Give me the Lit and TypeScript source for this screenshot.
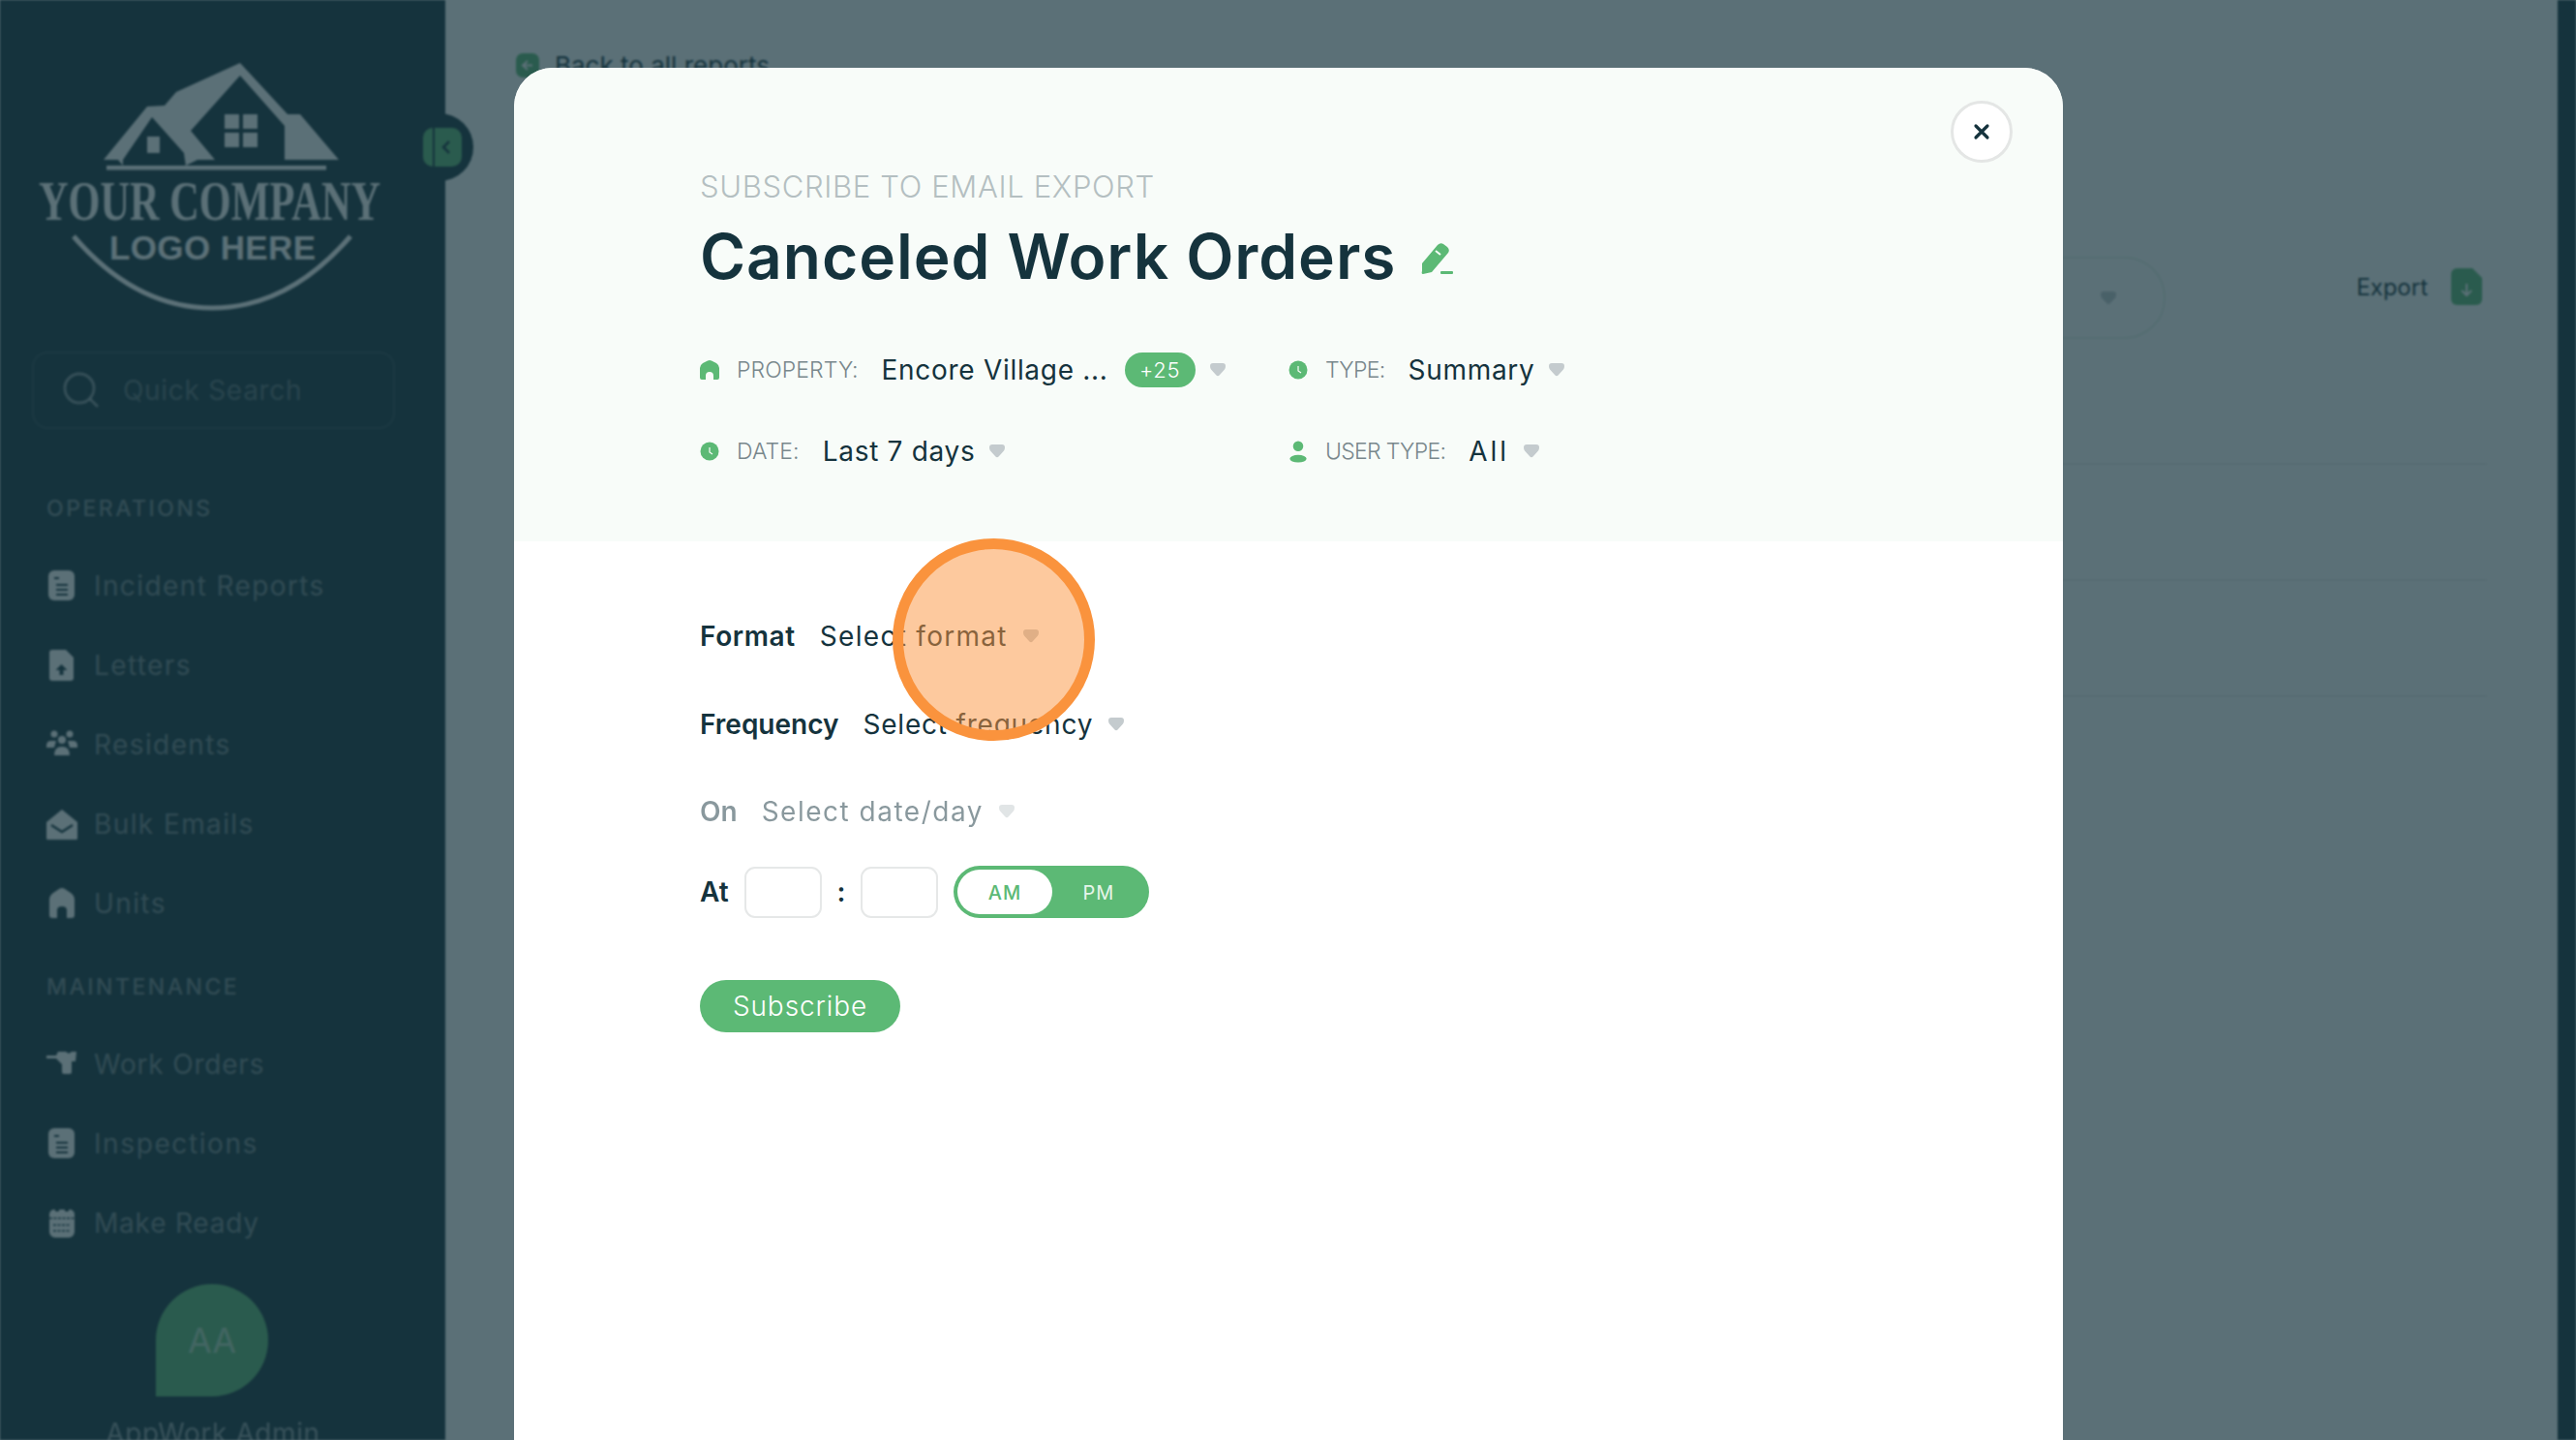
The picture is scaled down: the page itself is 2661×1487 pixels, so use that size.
import { LitElement, html, css, svg } from "lit";
import { customElement } from "lit/decorators.js";

const ICONS: Record<string, any> = {
  doc: svg`<rect x="2" y="0" width="27" height="31" rx="6"/><g stroke="#15333d" stroke-width="2"><path d="M8 8h5M10 15h12M10 20h12M10 25h12"/></g>`,
  letter: svg`<path d="M6 0h14l8 8v21a3 3 0 0 1-3 3H6a3 3 0 0 1-3-3V3a3 3 0 0 1 3-3z"/><path d="M15.500 15l6 6h-4v5h-4v-5h-4z" fill="#15333d"/>`,
  people: svg`<circle cx="8" cy="5" r="3.500"/><circle cx="24" cy="5" r="3.500"/><circle cx="16" cy="11" r="4"/><path d="M0 17q0-5 5-5h5l-2 7H0zM32 17q0-5-5-5h-5l2 7h8zM8 27q0-9 8-9t8 9z"/>`,
  mail: svg`<path d="M0 14L16 1l16 13v16a3 3 0 0 1-3 3H3a3 3 0 0 1-3-3z"/><path d="M5 17l11 7 11-7" fill="none" stroke="#15333d" stroke-width="2.500"/>`,
  home: svg`<path d="M3 12Q3 8 7 5L13 1q3-2 6 0l6 4q4 3 4 7v16a3 3 0 0 1-3 3h-5v-8q0-4-5-4t-5 4v8H6a3 3 0 0 1-3-3z"/>`,
  tool: svg`<path d="M0 7h10l2-4h8l3 2 3-2h5l-1 10h-4v11q0 2-2 2h-6q-2 0-2-2v-8l-6-6H0z"/>`,
  cal: svg`<path d="M3 7a5 5 0 0 1 5-5h1v2h4V2h6v2h4V2h1a5 5 0 0 1 5 5v18a6 6 0 0 1-6 6H9a6 6 0 0 1-6-6z"/><path d="M3 11h26M7 18h18M7 24h18" stroke="#15333d" stroke-width="1.500" stroke-dasharray="3 1.500"/>`,
};

const caret = html`<svg class="caret" viewBox="0 0 16 14"><path d="M3 0h10q3 0 3 3 0 2-1 3.500L10 12q-2 2.500-4 0L1 6.500Q0 5 0 3q0-3 3-3z"/></svg>`;
const clock = html`<svg class="fi" viewBox="0 0 20 20"><circle cx="10" cy="10" r="9.500"/><path d="M10 6v5l3 2" fill="none" stroke="#f8fcf9" stroke-width="1.200"/></svg>`;

const NAV_A = [["doc", "Incident Reports", ""], ["letter", "Letters", ""], ["people", "Residents", ""], ["mail", "Bulk Emails", ""], ["home", "Units", ""]];
const NAV_B = [["tool", "Work Orders", "tight"], ["doc", "Inspections", "wide"], ["cal", "Make Ready", "tight"]];

@customElement("app-root")
export class AppRoot extends LitElement {
  static styles = css`
    :host { display: block; width: 2661px; height: 1487px; position: relative; overflow: hidden; font-family: Inter, "Liberation Sans", sans-serif; color: #15333d; background: #fff; }
    * { box-sizing: border-box; }

    .app { display: grid; grid-template-columns: 460px 1fr 19px; height: 1487px; filter: blur(1.2px); background: #fff; }
    .strip { background: #15333d; }
    .side { background: #15333d; position: relative; height: 1487px; padding: 0 0 0 48px; }
    .logo { display: block; width: 460px; height: 330px; margin-left: -48px; overflow: visible; }
    .logo text { fill: #fff; }
    .search { margin: 33px 0 0 -15px; width: 375px; height: 80px; border: 2px solid rgba(255,255,255,.1); border-radius: 16px; display: flex; align-items: center; padding-left: 30px; gap: 24px; color: rgba(255,255,255,.3); font-size: 28px; letter-spacing: .7px; }
    .search svg { width: 38px; height: 38px; fill: none; stroke: rgba(255,255,255,.46); stroke-width: 3; }
    .sec { font-size: 23px; letter-spacing: 2.5px; line-height: 30px; color: rgba(255,255,255,.42); font-weight: 500; }
    .sec.a { margin-top: 67px; }
    .sec.b { margin-top: 30px; }
    .nav { height: 82px; display: flex; align-items: center; gap: 17px; font-size: 28px; letter-spacing: 1.4px; color: rgba(255,255,255,.42); }
    .nav.tight { letter-spacing: .8px; }
    .nav.wide { letter-spacing: 1.6px; }
    .nav svg { width: 32px; height: 32px; fill: #fff; }
    .nav.first { margin-top: 24px; }
    .avatar { position: absolute; left: 161px; top: 1326px; width: 116px; height: 116px; border-radius: 50% 50% 50% 0; background: #5cb975; display: flex; align-items: center; justify-content: center; color: rgba(255,255,255,.5); font-size: 36px; }
    .who { position: absolute; left: 0; width: 440px; top: 1460px; text-align: center; font-size: 28px; letter-spacing: .6px; line-height: 40px; color: rgba(255,255,255,.5); }
    .colwrap { position: relative; overflow: visible; z-index: 1; }
    .collapse { position: absolute; left: 419px; top: 117px; width: 70px; height: 70px; border-radius: 50%; background: #15333d; z-index: 2; display: flex; align-items: center; justify-content: center; }
    .collapse svg { width: 40px; height: 40px; margin-left: 5px; }

    .main { padding: 55px 78px 0 73px; background: #fff; min-width: 0; }
    .back { display: flex; align-items: center; gap: 16px; font-size: 26px; color: #15333d; height: 25px; }
    .back svg { width: 24px; height: 25px; }
    .tools { display: flex; justify-content: flex-end; margin-top: 185px; align-items: flex-start; }
    .dd { width: 210px; height: 85px; border: 2px solid #e6f2ea; border-radius: 42px; display: flex; align-items: center; justify-content: flex-end; padding: 0 49px 0 0; margin-right: 197px; }
    .dd .caret { margin: 0; }
    .export { display: flex; gap: 24px; align-items: center; font-size: 24px; height: 38px; margin-top: 12px; }
    .export svg { width: 32px; height: 38px; fill: #5cb975; }
    .rows { margin-top: 128px; }
    .rows div { height: 120px; border-bottom: 2px solid #f0f0f0; margin-right: -5px; }
    .rows div:first-child { height: 1px; }

    .overlay { position: absolute; inset: 0; background: rgba(21,51,61,.7); display: flex; align-items: flex-start; padding: 70px 0 0 531px; z-index: 5; }
    .modal { position: relative; width: 1600px; height: 1480px; flex: none; border-radius: 40px 40px 0 0; background: #fff; overflow: hidden; }
    .head { height: 489px; background: #f8fcf9; padding: 103px 0 0 192px; }
    .sub { font-size: 31px; line-height: 40px; color: #b4bfc1; letter-spacing: .65px; font-weight: 300; }
    .titlerow { display: flex; align-items: center; gap: 26px; margin-top: 14px; height: 76px; }
    h1 { margin: 0; font-size: 64px; line-height: 76px; font-weight: 600; letter-spacing: .95px; color: #15333d; }
    .edit { width: 33px; height: 34px; fill: #5cb975; margin-top: 3px; }
    .filters { display: grid; grid-template-columns: 608px auto; row-gap: 44px; margin-top: 59px; }
    .f { display: flex; align-items: center; height: 40px; font-size: 28px; letter-spacing: .7px; }
    .f .all { letter-spacing: 3px; }
    .slot { width: 38px; display: flex; align-items: center; }
    .fi { width: 20px; height: 20px; fill: #5cb975; }
    .fi.u { height: 23px; }
    .l { font-size: 23px; color: #78878c; margin-right: 24px; font-weight: 300; letter-spacing: .1px; }
    .l.t { letter-spacing: -.7px; }
    .pill { width: 73px; height: 36px; border-radius: 18px; background: #5cb975; color: #fff; font-size: 22px; display: flex; align-items: center; justify-content: center; margin-left: 17px; font-weight: 300; }
    .caret { width: 16px; height: 14px; fill: #c4cbce; margin-left: 15px; flex: none; }
    .pill + .caret { margin-left: 15px; }

    .body { padding: 78px 0 0 192px; }
    .r { display: flex; align-items: center; height: 40px; font-size: 28px; gap: 25px; letter-spacing: 1.3px; }
    .r .caret { margin-left: -9px; }
    .r b { font-weight: 600; letter-spacing: 0; }
    .r b.w { letter-spacing: .6px; }
    .r .n { letter-spacing: .8px; }
    .r .o { letter-spacing: 1.5px; }
    .r.mt { margin-top: 51px; }
    .r.off { opacity: .5; margin-top: 50px; }
    .at { display: flex; align-items: center; height: 54px; margin-top: 36px; font-size: 28px; }
    .at b { font-weight: 600; width: 46px; }
    .inp { width: 80px; height: 53px; border: 2px solid #e6e8e8; border-radius: 11px; background: #fff; }
    .colon { width: 40px; text-align: center; font-weight: 600; }
    .tog { width: 202px; height: 54px; border-radius: 27px; background: #5cb975; margin-left: 16px; display: flex; align-items: center; padding: 4px; font-size: 20px; letter-spacing: 1px; color: #e6f5ea; }
    .tog span { display: flex; align-items: center; justify-content: center; height: 46px; padding-top: 2px; }
    .tog .on { width: 98px; background: #fff; color: #5cb975; border-radius: 23px; font-weight: 500; }
    .tog .offp { flex: 1; }
    .btn { margin-top: 64px; width: 207px; height: 54px; border-radius: 27px; background: #5cb975; color: #fff; display: flex; align-items: center; justify-content: center; font-size: 28px; letter-spacing: .9px; font-weight: 300; }

    .close { position: absolute; right: 52px; top: 34px; width: 64px; height: 64px; border-radius: 50%; background: #fff; border: 3px solid #e4e6e5; display: flex; align-items: center; justify-content: center; }
    .close svg { width: 18px; height: 18px; stroke: #15333d; stroke-width: 3.200; stroke-linecap: round; fill: none; }
    .spot { position: absolute; left: 391px; top: 486px; width: 209px; height: 209px; border-radius: 50%; border: 11px solid #fa933d; background: rgba(252,148,62,.5); }
  `;

  private logo() {
    return svg`<svg class="logo" viewBox="0 0 460 330">
      <path fill="#fff" d="M107 165L152 110 170 109 182 95 248 65 297 118 310 118 350 165 294 165 294 130 248 78 197 135 222 165 204 165 192 171 127 171 122 165Z"/>
      <path fill="#15333d" d="M127 165L157 121 190 158 192 172 127 172Z"/>
      <rect x="152" y="141" width="13" height="17" fill="#fff"/>
      <path fill="#fff" d="M232 118h15v15h-15zM251 118h15v15h-15zM232 137h15v15h-15zM251 137h15v15h-15z"/>
      <rect x="110" y="171" width="227" height="4.500" fill="#fff"/>
      <text x="40" y="227" font-family="Liberation Serif" font-weight="700" font-size="58" textLength="353" lengthAdjust="spacingAndGlyphs">YOUR COMPANY</text>
      <text x="113" y="268" font-family="Liberation Sans" font-weight="700" font-size="35" textLength="214" letter-spacing="1">LOGO HERE</text>
      <path d="M76 244Q140 318 219 318T362 244" fill="none" stroke="#fff" stroke-width="5"/>
    </svg>`;
  }

  private nav(items: string[][]) {
    return items.map(([i, t, c], n) => html`<div class="nav ${c} ${n === 0 ? "first" : ""}"><svg viewBox="0 0 32 32">${ICONS[i]}</svg><span>${t}</span></div>`);
  }

  render() {
    return html`
      <div class="app">
        <div class="colwrap">
          <aside class="side">
            ${this.logo()}
            <div class="search">
              <svg viewBox="0 0 38 38"><circle cx="17" cy="17" r="15"/><path d="M28 28l8 8"/></svg>
              <span>Quick Search</span>
            </div>
            <div class="sec a">OPERATIONS</div>
            ${this.nav(NAV_A)}
            <div class="sec b">MAINTENANCE</div>
            ${this.nav(NAV_B)}
            <div class="avatar">AA</div>
            <div class="who">AppWork Admin</div>
          </aside>
          <div class="collapse">
            <svg viewBox="0 0 40 40"><rect width="40" height="40" rx="10" fill="#5cb975"/><path d="M11 0v40" stroke="#15333d" stroke-width="2"/><path d="M27 14l-6 6 6 6" fill="none" stroke="#15333d" stroke-width="2.500"/></svg>
          </div>
        </div>
        <main class="main">
          <div class="back">
            <svg viewBox="0 0 24 25"><rect width="24" height="25" rx="7" fill="#5cb975"/><path d="M7 12.500h10M12 8l-5 4.500 5 4.500" fill="none" stroke="#fff" stroke-width="2"/></svg>
            <span>Back to all reports</span>
          </div>
          <div class="tools">
            <div class="dd">${caret}</div>
            <div class="export"><span>Export</span><svg viewBox="0 0 32 38"><path d="M6 0h16l10 10v22a6 6 0 0 1-6 6H6a6 6 0 0 1-6-6V6a6 6 0 0 1 6-6z"/><path d="M16 16v12M11 23l5 5 5-5" fill="none" stroke="#fff" stroke-width="2"/></svg></div>
          </div>
          <div class="rows"><div></div><div></div><div></div></div>
        </main>
        <div class="strip"></div>
      </div>

      <div class="overlay">
        <section class="modal">
          <div class="head">
            <div class="sub">SUBSCRIBE TO EMAIL EXPORT</div>
            <div class="titlerow">
              <h1>Canceled Work Orders</h1>
              <svg class="edit" viewBox="0 0 33 34"><path d="M1 22L17 3Q20 0 23 2L27 5Q30 8 28 11L11 31 2 33Q0 33 1 30Z"/><path d="M15 9l5 4" stroke="#f8fcf9" stroke-width="2"/><rect x="20" y="30" width="13" height="3" rx="1"/></svg>
            </div>
            <div class="filters">
              <div class="f">
                <span class="slot"><svg class="fi" viewBox="0 0 20 20"><path d="M0 8Q0 5 3 3L8 .5q2-1 4 0L17 3q3 2 3 5v10a2 2 0 0 1-2 2h-4v-4q0-4-4-4t-4 4v4H2a2 2 0 0 1-2-2z"/></svg></span>
                <span class="l">PROPERTY:</span><span>Encore Village ...</span><span class="pill">+25</span>${caret}
              </div>
              <div class="f">
                <span class="slot">${clock}</span>
                <span class="l t">TYPE:</span><span>Summary</span>${caret}
              </div>
              <div class="f">
                <span class="slot">${clock}</span>
                <span class="l">DATE:</span><span>Last 7 days</span>${caret}
              </div>
              <div class="f">
                <span class="slot"><svg class="fi u" viewBox="0 0 20 24"><circle cx="10" cy="6" r="5.500"/><ellipse cx="10" cy="19.500" rx="9" ry="4"/></svg></span>
                <span class="l t">USER TYPE:</span><span class="all">All</span>${caret}
              </div>
            </div>
          </div>
          <div class="body">
            <div class="r"><b class="w">Format</b><span>Select format</span>${caret}</div>
            <div class="r mt"><b>Frequency</b><span class="n">Select frequency</span>${caret}</div>
            <div class="r off"><b>On</b><span class="o">Select date/day</span>${caret}</div>
            <div class="at">
              <b>At</b>
              <div class="inp"></div><span class="colon">:</span><div class="inp"></div>
              <div class="tog"><span class="on">AM</span><span class="offp">PM</span></div>
            </div>
            <div class="btn">Subscribe</div>
          </div>
          <div class="close"><svg viewBox="0 0 18 18"><path d="M3 3l12 12M15 3L3 15"/></svg></div>
          <div class="spot"></div>
        </section>
      </div>
    `;
  }
}
